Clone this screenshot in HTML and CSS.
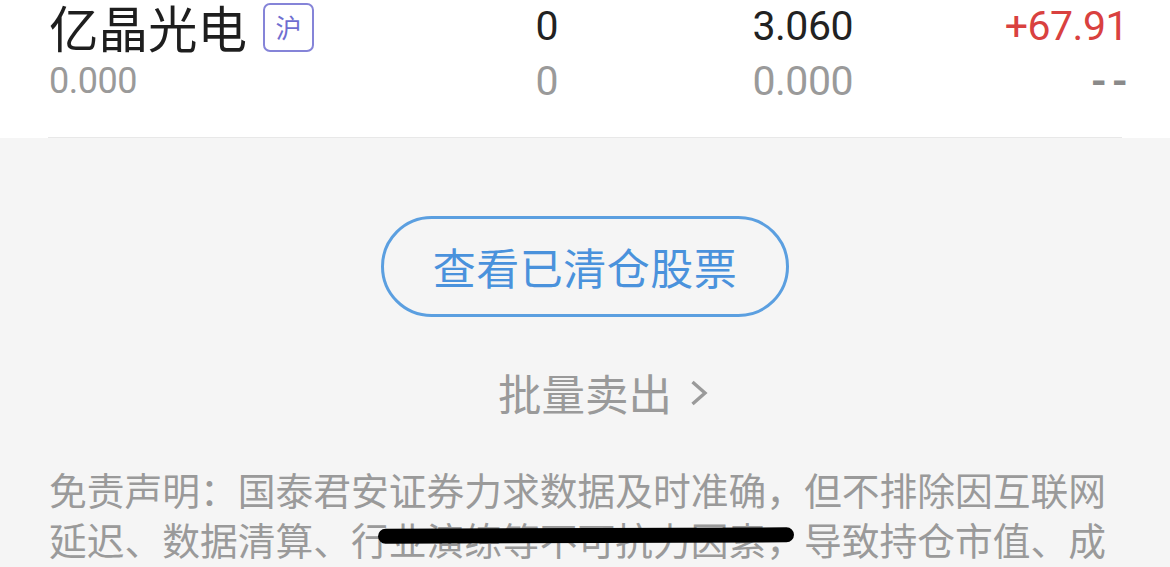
FILE: index.html
```html
<!DOCTYPE html>
<html lang="zh-CN">
<head>
  <meta charset="utf-8" />
  <meta name="viewport" content="width=device-width, initial-scale=1" />
  <title>持仓</title>
  <link rel="stylesheet" href="styles.css">
</head>
<body>
  <div class="holding">
    <div class="holding-inner">
      <div class="row row-main">
        <div class="name">亿晶光电<span class="market">沪</span></div>
        <div class="num">0</div>
        <div class="num">3.060</div>
        <div class="num up">+67.91</div>
      </div>
      <div class="row row-sub">
        <div class="num sub-left">0.000</div>
        <div class="num">0</div>
        <div class="num">0.000</div>
        <div class="num empty">--</div>
      </div>
    </div>
  </div>

  <div class="actions">
    <button class="btn-outline">查看已清仓股票</button>
    <a class="link-more" href="#">批量卖出
      <svg class="chevron" viewBox="0 0 18 26" width="18" height="26"><path d="M2.5 2 L15 13 L2.5 24" fill="none" stroke="#9a9a9a" stroke-width="3.4"/></svg>
    </a>
  </div>

  <div class="disclaimer">
    <p>免责声明：国泰君安证券力求数据及时准确，但不排除因互联网延迟、数据清算、行业演练等不可抗力因素，导致持仓市值、成</p>
    <div class="scribble"></div>
  </div>
</body>
</html>
```

FILE: styles.css
```css
body {
  margin: 0;
  background-color: #f5f5f5;
  font-family: Roboto, "Noto Sans CJK SC", sans-serif;
  height: 567px;
  overflow: hidden;
}
.holding {
  background-color: #fff;
  padding: 0 48px;
}
.holding-inner {
  height: 137px;
  border-bottom: 1px solid #e8e8e8;
}
.row {
  display: grid;
  grid-template-columns: 1fr 200px 295px 275px;
  align-items: center;
  margin-right: -6px;
  padding-left: 1px;
}
.row-main {
  height: 54px;
  color: #222;
}
.row-sub {
  height: 56px;
  color: #9a9a9a;
}
.name {
  display: flex;
  align-items: center;
  font-family: "Noto Sans CJK SC", sans-serif;
  font-size: 49.5px;
  line-height: 54px;
  color: #1e1e1e;
}
.market {
  display: inline-flex;
  justify-content: center;
  align-items: center;
  width: 47px;
  height: 45px;
  margin-left: 16px;
  border: 2px solid #8584d8;
  border-radius: 7px;
  font-size: 26px;
  line-height: 1.2;
  color: #6f6ed0;
}
.num {
  text-align: right;
  font-size: 41px;
  line-height: 1.2;
  letter-spacing: -0.5px;
}
.num.sub-left {
  text-align: left;
  font-size: 36px;
}
.num.empty {
  font-weight: 700;
  letter-spacing: 5px;
  margin-right: -5px;
  color: #8a8a8a;
}
.up {
  color: #d9413f;
}
.actions {
  display: flex;
  flex-direction: column;
  align-items: center;
  padding-top: 78px;
}
.btn-outline {
  width: 408px;
  height: 101px;
  border: 3px solid #5b9fe0;
  border-radius: 51px;
  background: transparent;
  color: #4a92dc;
  font-family: "Noto Sans CJK SC", sans-serif;
  font-size: 43px;
  letter-spacing: 0.5px;
  padding: 0 0 2px;
}
.link-more {
  display: flex;
  align-items: center;
  margin-top: 54px;
  margin-left: 36px;
  font-family: "Noto Sans CJK SC", sans-serif;
  font-size: 43.5px;
  color: #9a9a9a;
  text-decoration: none;
  line-height: 1;
}
.chevron {
  margin-left: 18px;
}
.disclaimer {
  position: relative;
  padding: 0 48px 0 49px;
  margin-top: 49px;
}
.disclaimer p {
  margin: 0;
  font-family: "Noto Sans CJK SC", sans-serif;
  font-size: 37.75px;
  line-height: 50px;
  color: #9a9a9a;
}
.scribble {
  position: absolute;
  left: 378px;
  top: 64px;
  width: 416px;
  height: 15px;
  background: #000;
  border-radius: 8px;
  transform: rotate(-0.2deg);
}
```
